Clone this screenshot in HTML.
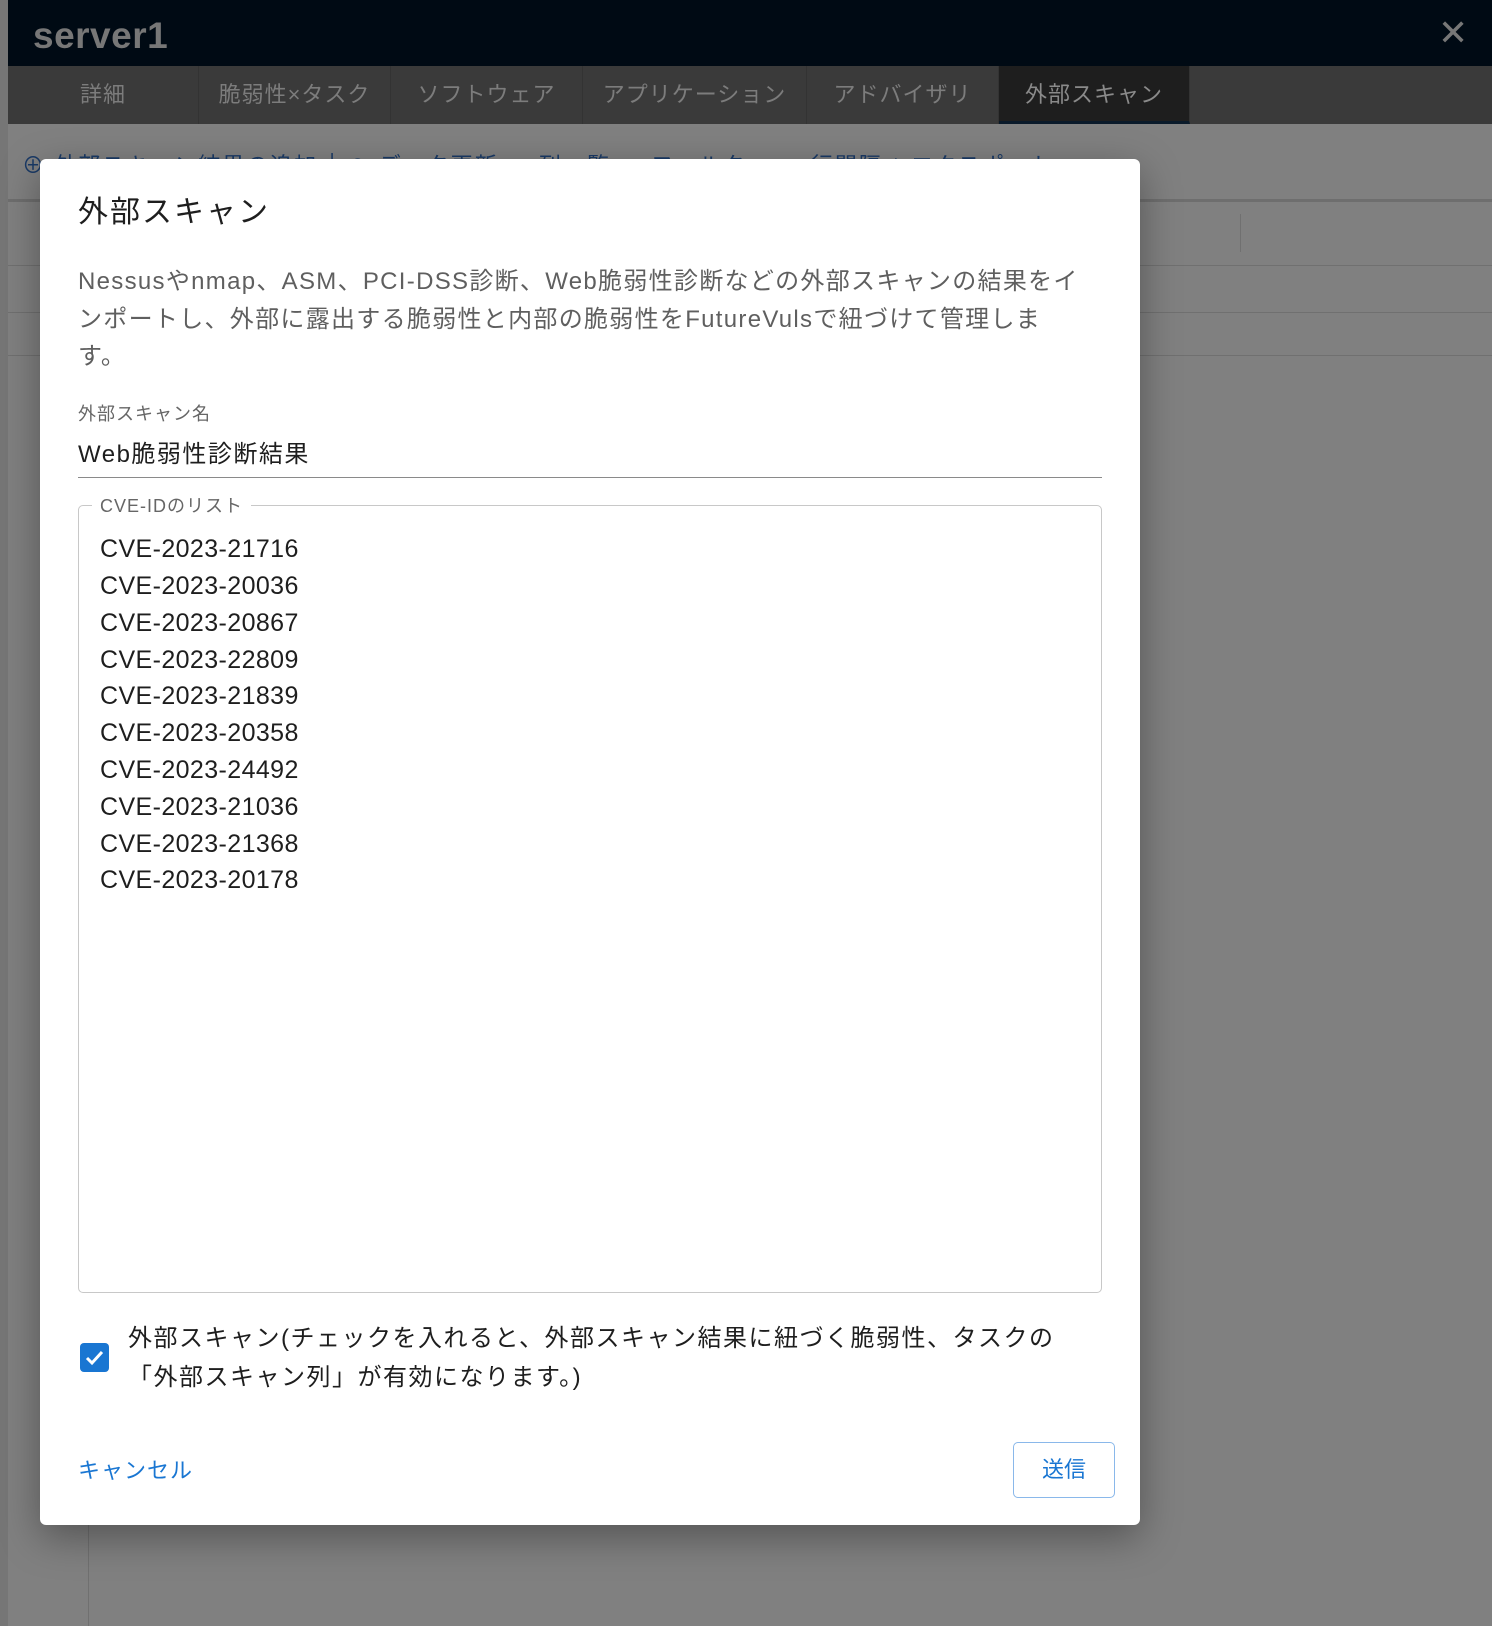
<!DOCTYPE html>
<html><head><meta charset="utf-8"><style>
*{margin:0;padding:0;box-sizing:border-box}
body{width:1492px;height:1626px;position:relative;overflow:hidden;background:#808080;font-family:"Liberation Sans","Noto Sans CJK JP",sans-serif}
.a{position:absolute;white-space:nowrap}
.hdr{left:0;top:0;width:1492px;height:66px;background:#000a14}
.tabs{left:8px;top:66px;width:1484px;height:58px;background:#3a3a3a}
.tab{top:66px;height:58px;line-height:58px;text-align:center;color:#7c7c7c;font-size:22px;border-right:1px solid #333;letter-spacing:1px}
.m{left:40px;top:159px;width:1100px;height:1366px;background:#fff;border-radius:6px;box-shadow:0 12px 40px rgba(0,0,0,.35)}
.cve{left:100px;font-size:25px;color:#1e1e1e;letter-spacing:.4px}
</style></head><body>
<div class="a hdr"></div>
<div class="a" style="left:0;top:0;width:8px;height:1626px;background:#767676"></div>
<div class="a" style="left:33px;top:15px;font-size:37px;font-weight:bold;color:#777;letter-spacing:.5px">server1</div>
<div class="a" style="left:1438px;top:12px;font-size:36px;color:#777">✕</div>
<div class="a tabs"></div>
<div class="a tab" style="left:8px;width:191px">詳細</div>
<div class="a tab" style="left:199px;width:192px">脆弱性×タスク</div>
<div class="a tab" style="left:391px;width:192px">ソフトウェア</div>
<div class="a tab" style="left:583px;width:224px">アプリケーション</div>
<div class="a tab" style="left:807px;width:192px">アドバイザリ</div>
<div class="a tab" style="left:999px;width:191px;background:#1e1e1e;color:#8a8a8a;border-bottom:3px solid #0a1a2a">外部スキャン</div>
<div class="a" style="left:8px;top:199px;width:1484px;height:3px;background:#6e6e6e"></div>
<div class="a" style="left:8px;top:265px;width:1484px;height:1px;background:#707070"></div>
<div class="a" style="left:8px;top:312px;width:1484px;height:1px;background:#707070"></div>
<div class="a" style="left:8px;top:355px;width:1484px;height:1px;background:#707070"></div>
<div class="a" style="left:88px;top:355px;width:1px;height:1271px;background:#707070"></div>
<div class="a" style="left:1240px;top:214px;width:1px;height:38px;background:#707070"></div>
<div class="a" style="left:22px;top:148px;font-size:22px;color:#1a3a66;letter-spacing:2px">⊕ 外部スキャン結果の追加 │ ⟳ データ更新 ⋯ 列一覧 ▬ フィルター ▬ 行間隔 ⤓ エクスポート</div>
<div class="a m"></div>
<div class="a" style="left:78px;top:187px;font-size:30px;color:#1e1e1e;letter-spacing:2px">外部スキャン</div>
<div class="a" style="left:78px;top:263px;font-size:24px;color:#5f5f5f;line-height:37.5px;letter-spacing:1.3px">Nessusやnmap、ASM、PCI-DSS診断、Web脆弱性診断などの外部スキャンの結果をイ<br>ンポートし、外部に露出する脆弱性と内部の脆弱性をFutureVulsで紐づけて管理しま<br>す。</div>
<div class="a" style="left:78px;top:400px;font-size:18px;color:#666;letter-spacing:1px">外部スキャン名</div>
<div class="a" style="left:78px;top:434px;font-size:24px;color:#1e1e1e;letter-spacing:1.5px">Web脆弱性診断結果</div>
<div class="a" style="left:78px;top:477px;width:1024px;height:1px;background:#8a8a8a"></div>
<div class="a" style="left:78px;top:505px;width:1024px;height:788px;border:1px solid #c8c8c8;border-radius:5px"></div>
<div class="a" style="left:92px;top:492px;background:#fff;padding:0 8px;font-size:18px;color:#666;letter-spacing:1px">CVE-IDのリスト</div>
<div class="a cve" style="top:535px">CVE-2023-21716</div>
<div class="a cve" style="top:572px">CVE-2023-20036</div>
<div class="a cve" style="top:609px">CVE-2023-20867</div>
<div class="a cve" style="top:646px">CVE-2023-22809</div>
<div class="a cve" style="top:682px">CVE-2023-21839</div>
<div class="a cve" style="top:719px">CVE-2023-20358</div>
<div class="a cve" style="top:756px">CVE-2023-24492</div>
<div class="a cve" style="top:793px">CVE-2023-21036</div>
<div class="a cve" style="top:830px">CVE-2023-21368</div>
<div class="a cve" style="top:866px">CVE-2023-20178</div>
<div class="a" style="left:80px;top:1343px;width:29px;height:29px;background:#1976d2;border-radius:4px"><svg width="29" height="29" viewBox="0 0 29 29"><path d="M7 15l5 5 10-11" stroke="#fff" stroke-width="3" fill="none"/></svg></div>
<div class="a" style="left:128px;top:1319px;font-size:24px;color:#1e1e1e;line-height:39px;letter-spacing:1.5px">外部スキャン(チェックを入れると、外部スキャン結果に紐づく脆弱性、タスクの<br>「外部スキャン列」が有効になります。)</div>
<div class="a" style="left:78px;top:1453px;font-size:22px;color:#1976d2;letter-spacing:1px">キャンセル</div>
<div class="a" style="left:1013px;top:1442px;width:102px;height:56px;border:1px solid #8ab8ea;border-radius:5px;text-align:center;line-height:54px;font-size:22px;color:#1976d2">送信</div>
</body></html>
